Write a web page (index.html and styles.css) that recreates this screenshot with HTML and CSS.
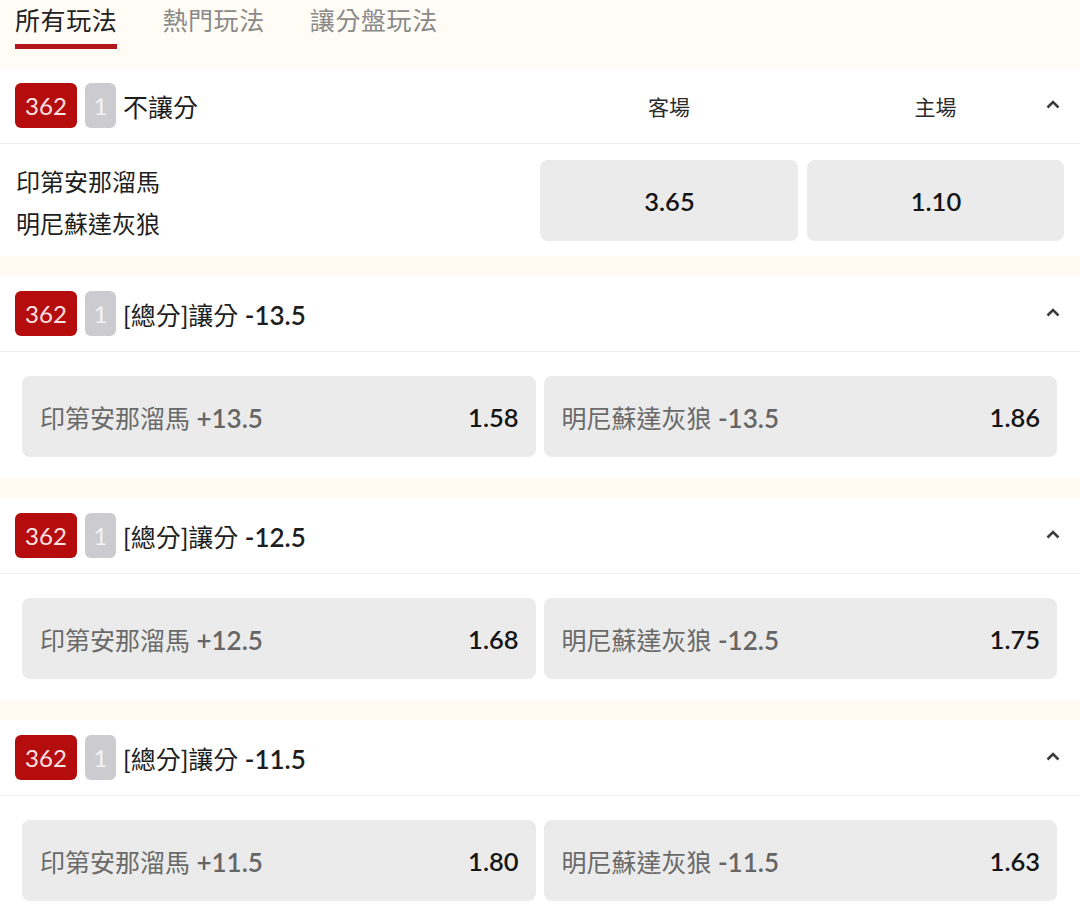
FILE: index.html
```html
<!DOCTYPE html>
<html lang="zh-Hant">
<head>
<meta charset="utf-8">
<title>所有玩法</title>
<link rel="stylesheet" href="styles.css">
</head>
<body>
<nav class="tabs">
  <a class="tab active">所有玩法</a>
  <a class="tab">熱門玩法</a>
  <a class="tab">讓分盤玩法</a>
</nav>

<section class="market">
  <div class="mk-head">
    <span class="badge red">362</span><span class="badge gray">1</span>
    <span class="mk-title">不讓分</span>
    <span class="col-label">客場</span>
    <span class="col-label">主場</span>
    <svg class="chev" viewBox="0 0 14 9" width="14" height="9"><path d="M1.5 7.5 L7 2 L12.5 7.5" fill="none" stroke="#3c3c3c" stroke-width="2.6"/></svg>
  </div>
  <div class="mk-body ml">
    <div class="teams">
      <div>印第安那溜馬</div>
      <div>明尼蘇達灰狼</div>
    </div>
    <button class="odd center"><span class="price">3.65</span></button>
    <button class="odd center"><span class="price">1.10</span></button>
  </div>
</section>
<div class="sep"></div>

<section class="market">
  <div class="mk-head">
    <span class="badge red">362</span><span class="badge gray">1</span>
    <span class="mk-title">[總分]讓分 <b class="num">-13.5</b></span>
    <svg class="chev" viewBox="0 0 14 9" width="14" height="9"><path d="M1.5 7.5 L7 2 L12.5 7.5" fill="none" stroke="#3c3c3c" stroke-width="2.6"/></svg>
  </div>
  <div class="mk-body hc">
    <button class="odd"><span class="lbl">印第安那溜馬 <b class="num">+13.5</b></span><span class="price">1.58</span></button>
    <button class="odd"><span class="lbl">明尼蘇達灰狼 <b class="num">-13.5</b></span><span class="price">1.86</span></button>
  </div>
</section>
<div class="sep"></div>

<section class="market">
  <div class="mk-head">
    <span class="badge red">362</span><span class="badge gray">1</span>
    <span class="mk-title">[總分]讓分 <b class="num">-12.5</b></span>
    <svg class="chev" viewBox="0 0 14 9" width="14" height="9"><path d="M1.5 7.5 L7 2 L12.5 7.5" fill="none" stroke="#3c3c3c" stroke-width="2.6"/></svg>
  </div>
  <div class="mk-body hc">
    <button class="odd"><span class="lbl">印第安那溜馬 <b class="num">+12.5</b></span><span class="price">1.68</span></button>
    <button class="odd"><span class="lbl">明尼蘇達灰狼 <b class="num">-12.5</b></span><span class="price">1.75</span></button>
  </div>
</section>
<div class="sep"></div>

<section class="market">
  <div class="mk-head">
    <span class="badge red">362</span><span class="badge gray">1</span>
    <span class="mk-title">[總分]讓分 <b class="num">-11.5</b></span>
    <svg class="chev" viewBox="0 0 14 9" width="14" height="9"><path d="M1.5 7.5 L7 2 L12.5 7.5" fill="none" stroke="#3c3c3c" stroke-width="2.6"/></svg>
  </div>
  <div class="mk-body hc">
    <button class="odd"><span class="lbl">印第安那溜馬 <b class="num">+11.5</b></span><span class="price">1.80</span></button>
    <button class="odd"><span class="lbl">明尼蘇達灰狼 <b class="num">-11.5</b></span><span class="price">1.63</span></button>
  </div>
</section>
</body>
</html>
```

FILE: styles.css
```css
* { box-sizing: border-box; }
html, body { margin: 0; padding: 0; background: #fff; }
body {
  font-family: Lato, "Noto Sans CJK TC", "Noto Sans", sans-serif;
  color: #1e1e1e;
  width: 1080px;
  overflow: hidden;
}

.tabs {
  height: 68px;
  background: #fffcf5;
  display: flex;
  gap: 45px;
  padding: 0 15px;
}
.tab {
  font-size: 25px;
  line-height: 1;
  color: #8a8a8a;
  padding-top: 8px;
  height: 49px;
  position: relative;
  letter-spacing: 0.6px;
}
.tab.active { color: #222; }
.tab.active::after {
  content: "";
  position: absolute;
  left: 0; right: 0; bottom: 0;
  height: 5px;
  background: #b3171c;
}

.market { background: #fff; }
.mk-head {
  position: relative;
  height: 76px;
  border-bottom: 1px solid #ececec;
  display: flex;
  align-items: center;
  padding: 0 16px 0 15px;
}
.badge {
  height: 45px;
  border-radius: 6px;
  display: inline-flex;
  align-items: center;
  justify-content: center;
  font-size: 24px;
  color: #fff;
  margin-right: 8px;
}
.badge.red { width: 62px; background: #b50d0d; color: #fbe3e3; }
.badge.gray { width: 31px; background: #cbcbd0; color: #f4f4f6; margin-right: 7px; }
.mk-title {
  flex: 1;
  font-size: 25px;
  color: #1e1e1e;
}
.num { font-weight: 600; font-size: 26px; }
.col-label {
  width: 258px;
  text-align: center;
  font-size: 21px;
  color: #2a2a2a;
}
.col-label + .col-label { margin-left: 9px; width: 257px; }
.chev {
  position: absolute;
  right: 20px;
  top: 50%;
  margin-top: -6px;
}

.mk-body { display: grid; }
.mk-body.ml {
  grid-template-columns: 1fr 258px 257px;
  column-gap: 9px;
  padding: 16px 16px 15px 16px;
  align-items: start;
}
.mk-body.hc {
  grid-template-columns: 1fr 1fr;
  column-gap: 8px;
  padding: 24px 23px 21px 22px;
}
.teams {
  font-size: 24px;
  line-height: 42px;
  color: #1e1e1e;
  height: 81px;
  padding-top: 1px;
}
.odd {
  height: 81px;
  border: 0;
  border-radius: 8px;
  background: #ebebeb;
  font-family: inherit;
  display: flex;
  align-items: center;
  justify-content: space-between;
  padding: 0 17px 0 18px;
  margin: 0;
}
.odd.center { justify-content: center; }
.lbl { font-size: 25px; color: #6a6a6a; }
.lbl .num { color: #666; }
.price { font-size: 25.5px; font-weight: 600; color: #151515; }

.sep {
  height: 20px;
  background: #fffbf3;
}
```
